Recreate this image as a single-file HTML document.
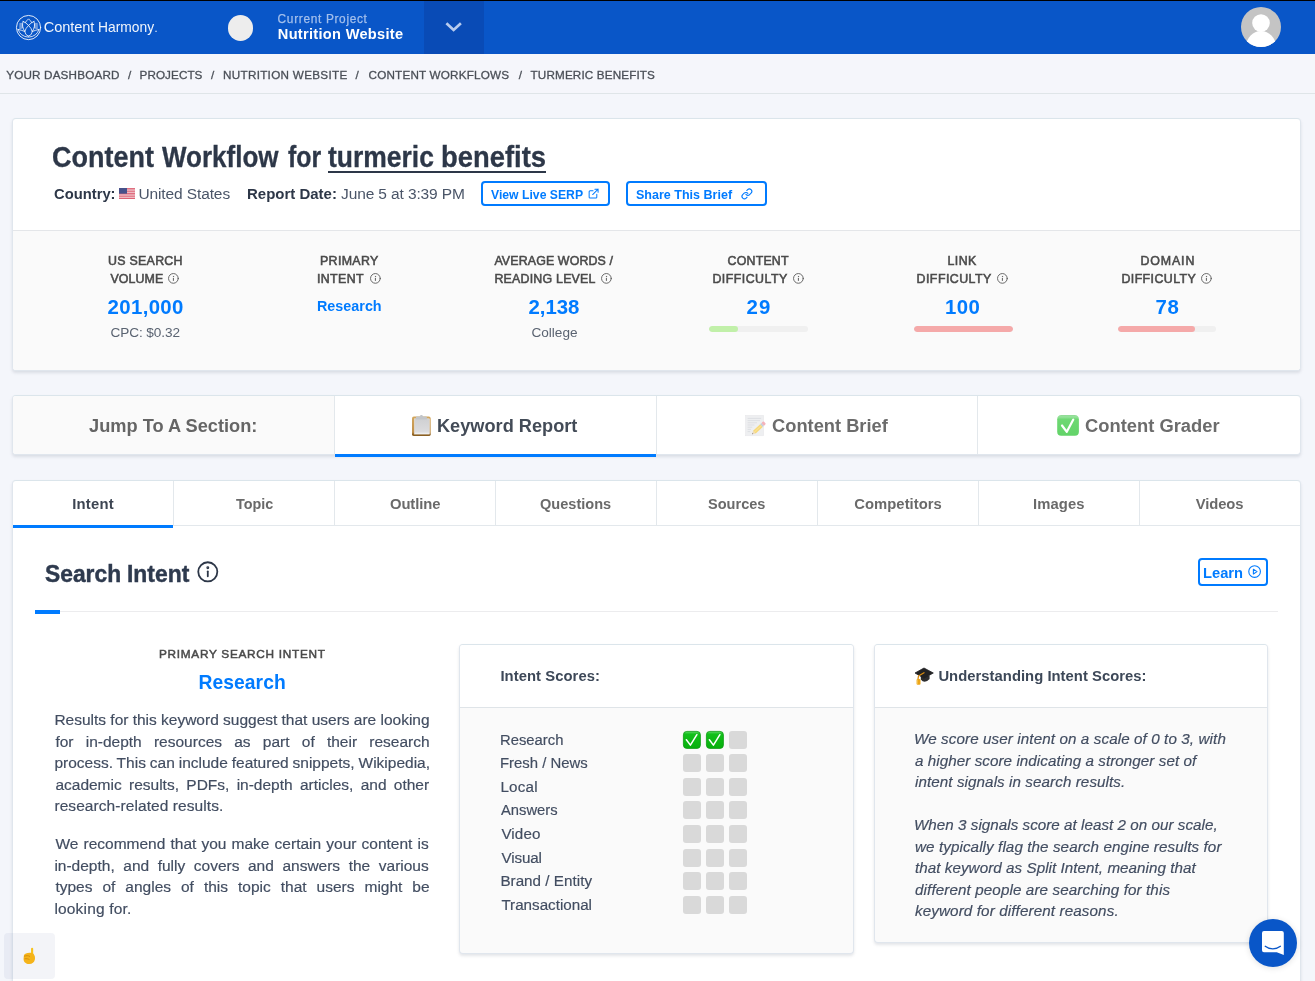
<!DOCTYPE html>
<html>
<head>
<meta charset="utf-8">
<title>Content Workflow for turmeric benefits</title>
<style>
*{box-sizing:border-box;margin:0;padding:0}
html,body{width:1315px;height:981px;overflow:hidden}
body{font-family:"Liberation Sans",sans-serif;background:#f4f6fb;color:#2d3748;position:relative}
.a{position:absolute}
.t{position:absolute;white-space:nowrap;line-height:1;font-family:"Liberation Sans",sans-serif}
svg{position:absolute;overflow:visible}
#hdr{left:0;top:0;width:1315px;height:54px;background:#0956c8;border-top:1px solid #000}
#dd{left:424px;top:1px;width:59.5px;height:53px;background:#094bb6}
#pc{left:227.5px;top:15px;width:25.5px;height:25.5px;border-radius:50%;background:#ededed}
#bc{left:0;top:54px;width:1315px;height:40px;background:#f5f6fb;border-bottom:1px solid #dfe5e8}
.card{background:#fff;border:1px solid #e0e6ed;border-top-color:#dbe5eb;border-radius:4px;box-shadow:0 2px 3px rgba(95,105,125,.17)}
.sep{background:#e3e8ec;width:1px}
.hl{background:#e3e8ec;height:1px}
.btn{border:2px solid #007bff;border-radius:4px;background:#fff}
.bar{height:6px;border-radius:3px;background:#f0f0f0;top:326px;overflow:hidden}
.bar i{display:block;height:6px;border-radius:3px}
.sq{width:17.8px;height:17.5px;border-radius:3px;background:#d9d9d9}
</style>
</head>
<body>
<!-- header -->
<div id="hdr" class="a"></div>
<div id="dd" class="a"></div>
<div id="pc" class="a"></div>
<svg style="left:15.930px;top:14.930px" width="25.100" height="25.100" viewBox="158 138 500 500" fill="none" stroke="#fff" stroke-opacity=".92" stroke-width="17" stroke-linecap="round" stroke-linejoin="round">
<circle cx="408" cy="388" r="241" stroke-width="19"/>
<path d="M340 292Q368 250 408 215Q448 250 476 292" />
<path d="M300 265Q350 285 408 345Q470 405 482 470Q480 535 408 562"/>
<path d="M516 265Q466 285 408 345Q346 405 334 470Q336 535 408 562"/>
<path d="M300 265Q284 300 290 360Q300 425 332 462"/>
<path d="M516 265Q532 300 526 360Q516 425 484 462"/>
<path d="M238 305L286 305L290 398L236 412Z" fill="#fff" fill-opacity=".4" stroke-width="9" stroke-opacity=".7"/>
<path d="M578 305L530 305L526 398L580 412Z" fill="#fff" fill-opacity=".4" stroke-width="9" stroke-opacity=".7"/>
<path d="M200 425Q262 438 332 466M616 425Q554 438 484 466"/>
<path d="M200 425Q240 565 408 580Q576 565 616 425"/>
</svg>
<svg style="left:445px;top:21.400px" width="17" height="11" viewBox="0 0 17 11" fill="none" stroke="#b7cbee" stroke-width="2.700" stroke-linecap="butt" stroke-linejoin="miter"><path d="M1.400 2.300l7.200 6.600L15.900 2.300"/></svg>
<svg style="left:1240.800px;top:7px" width="40" height="40" viewBox="0 0 40 40"><defs><clipPath id="av"><circle cx="20" cy="20" r="20"/></clipPath></defs><circle cx="20" cy="20" r="20" fill="#c4c4c4"/><g clip-path="url(#av)" fill="#fff"><circle cx="20" cy="16" r="8.800"/><ellipse cx="20" cy="40" rx="15" ry="16"/></g></svg>

<!-- breadcrumb -->
<div id="bc" class="a"></div>

<!-- card 1 -->
<div class="a card" style="left:12px;top:118px;width:1289px;height:252.500px"></div>
<div class="a" style="left:13px;top:230px;width:1287px;height:139.500px;background:#fafafa;border-top:1px solid #e4e6e9;border-radius:0 0 3px 3px"></div>
<div class="a" style="left:328px;top:171px;width:217.600px;height:2px;background:#2d3748"></div>
<!-- flag -->
<svg style="left:118.900px;top:188px" width="16" height="10.9" viewBox="0 0 16 10.9"><rect y="0.000" width="16" height="0.858" fill="#d8485e"/><rect y="0.838" width="16" height="0.858" fill="#ecb4bc"/><rect y="1.677" width="16" height="0.858" fill="#d8485e"/><rect y="2.515" width="16" height="0.858" fill="#ecb4bc"/><rect y="3.354" width="16" height="0.858" fill="#d8485e"/><rect y="4.192" width="16" height="0.858" fill="#ecb4bc"/><rect y="5.031" width="16" height="0.858" fill="#d8485e"/><rect y="5.869" width="16" height="0.858" fill="#ecb4bc"/><rect y="6.708" width="16" height="0.858" fill="#d8485e"/><rect y="7.546" width="16" height="0.858" fill="#ecb4bc"/><rect y="8.385" width="16" height="0.858" fill="#d8485e"/><rect y="9.223" width="16" height="0.858" fill="#ecb4bc"/><rect y="10.062" width="16" height="0.858" fill="#d8485e"/><rect width="8" height="5.700" fill="#47518a"/></svg>
<div class="a btn" style="left:481px;top:181px;width:128.600px;height:24.600px"></div>
<div class="a btn" style="left:626px;top:181px;width:141px;height:24.600px"></div>
<svg style="left:588.400px;top:188.400px" width="11" height="11" viewBox="0 0 24 24" fill="none" stroke="#007bff" stroke-width="2.200" stroke-linecap="round" stroke-linejoin="round"><path d="M19.200 13.500V20a2 2 0 0 1-2 2H4.500a2 2 0 0 1-2-2V8.200a2 2 0 0 1 2-2H11M15 2.500h7v7M10.200 14.300L22 2.500"/></svg>
<svg style="left:740.800px;top:188.400px" width="11.800" height="11.800" viewBox="0 0 24 24" fill="none" stroke="#007bff" stroke-width="2.200" stroke-linecap="round" stroke-linejoin="round"><path d="M10 13a5 5 0 0 0 7.540.54l3-3a5 5 0 0 0-7.070-7.070l-1.720 1.710M14 11a5 5 0 0 0-7.540-.54l-3 3a5 5 0 0 0 7.070 7.070l1.710-1.710"/></svg>
<!-- info icons -->
<svg style="left:168.30px;top:272.55px" width="10.8" height="10.8" viewBox="0 0 24 24" fill="none" stroke="#5a5a5a" stroke-width="2" stroke-linecap="round"><circle cx="12" cy="12" r="10.800"/><path d="M12 11.800v4.800" stroke-width="2.200"/><circle cx="12" cy="7.800" r=".5" fill="#5a5a5a" stroke-width="1.600"/></svg>
<svg style="left:369.90px;top:272.55px" width="10.8" height="10.8" viewBox="0 0 24 24" fill="none" stroke="#5a5a5a" stroke-width="2" stroke-linecap="round"><circle cx="12" cy="12" r="10.800"/><path d="M12 11.800v4.800" stroke-width="2.200"/><circle cx="12" cy="7.800" r=".5" fill="#5a5a5a" stroke-width="1.600"/></svg>
<svg style="left:601.10px;top:272.55px" width="10.8" height="10.8" viewBox="0 0 24 24" fill="none" stroke="#5a5a5a" stroke-width="2" stroke-linecap="round"><circle cx="12" cy="12" r="10.800"/><path d="M12 11.800v4.800" stroke-width="2.200"/><circle cx="12" cy="7.800" r=".5" fill="#5a5a5a" stroke-width="1.600"/></svg>
<svg style="left:792.50px;top:272.55px" width="10.8" height="10.8" viewBox="0 0 24 24" fill="none" stroke="#5a5a5a" stroke-width="2" stroke-linecap="round"><circle cx="12" cy="12" r="10.800"/><path d="M12 11.800v4.800" stroke-width="2.200"/><circle cx="12" cy="7.800" r=".5" fill="#5a5a5a" stroke-width="1.600"/></svg>
<svg style="left:997.10px;top:272.55px" width="10.8" height="10.8" viewBox="0 0 24 24" fill="none" stroke="#5a5a5a" stroke-width="2" stroke-linecap="round"><circle cx="12" cy="12" r="10.800"/><path d="M12 11.800v4.800" stroke-width="2.200"/><circle cx="12" cy="7.800" r=".5" fill="#5a5a5a" stroke-width="1.600"/></svg>
<svg style="left:1201.30px;top:272.55px" width="10.8" height="10.8" viewBox="0 0 24 24" fill="none" stroke="#5a5a5a" stroke-width="2" stroke-linecap="round"><circle cx="12" cy="12" r="10.800"/><path d="M12 11.800v4.800" stroke-width="2.200"/><circle cx="12" cy="7.800" r=".5" fill="#5a5a5a" stroke-width="1.600"/></svg>
<!-- bars -->
<div class="a bar" style="left:708.600px;width:99.200px"><i style="width:29.200px;background:#c1f0a9"></i></div>
<div class="a bar" style="left:913.600px;width:99.400px"><i style="width:99.400px;background:#f5a9a9"></i></div>
<div class="a bar" style="left:1117.600px;width:98.800px"><i style="width:77px;background:#f5a9a9"></i></div>

<!-- jump card -->
<div class="a card" style="left:12px;top:395px;width:1289px;height:60px;background:#fff"></div>
<div class="a" style="left:13px;top:396px;width:321px;height:58px;background:#fafafa;border-radius:3px 0 0 3px"></div>
<div class="a sep" style="left:334px;top:396px;height:58px"></div>
<div class="a sep" style="left:656px;top:396px;height:58px"></div>
<div class="a sep" style="left:977px;top:396px;height:58px"></div>
<div class="a" style="left:335px;top:454px;width:320.500px;height:3px;background:#007bff"></div>
<!-- clipboard -->
<svg style="left:412.400px;top:414.800px" width="18.800" height="21.200" viewBox="0 0 18.800 21.200"><defs><linearGradient id="cb" x1="0" y1="0" x2="0" y2="1"><stop offset="0" stop-color="#d3a75e"/><stop offset=".8" stop-color="#c0904a"/><stop offset=".93" stop-color="#8a5f22"/></linearGradient><linearGradient id="cp" x1="0" y1="0" x2="0" y2="1"><stop offset="0" stop-color="#cfd0d2"/><stop offset=".85" stop-color="#dcdcde"/><stop offset="1" stop-color="#f4f4f5"/></linearGradient></defs><rect x="0" y="1.500" width="18.700" height="19.600" rx="1.900" fill="url(#cb)"/><rect x="2.400" y="3.800" width="15" height="15.300" fill="url(#cp)" stroke="#ececee" stroke-width=".5"/><path d="M3.900 4.400V2.600a1 1 0 0 1 1-1h2.700c.4-1 1-1.500 1.800-1.500s1.400.5 1.800 1.500h2.700a1 1 0 0 1 1 1v1.800z" fill="#c2c5c9"/></svg>
<!-- memo -->
<svg style="left:745.400px;top:415px" width="21" height="21" viewBox="0 0 21 21" opacity=".8"><rect x=".4" y=".3" width="18.300" height="20.500" fill="#ebecee" stroke="#e0e1e4" stroke-width=".5"/><path d="M2.600 3.400h13.600M2.600 5.600h12.400M2.600 7.800h9.400M2.600 10h6.800M2.600 12.200h4.600M2.600 14.400h3.400M2.600 16.600h2.600" stroke="#cdd0d5" stroke-width=".7"/><g transform="translate(7 19.200) rotate(-42.500)"><path d="M0 0l3.200-1.900v3.800z" fill="#ead2a8"/><path d="M0 0l1.100-.65v1.300z" fill="#55565c"/><rect x="3.200" y="-1.900" width="9.600" height="3.800" fill="#f6cf58"/><rect x="3.200" y="-.5" width="9.600" height="1" fill="#f9dc7c"/><rect x="12.800" y="-1.900" width="1.700" height="3.800" fill="#b9c3cf"/><rect x="14.500" y="-1.900" width="2.800" height="3.800" rx="1" fill="#f2a0aa"/></g></svg>
<!-- check -->
<svg style="left:1056.800px;top:415px" width="22.100" height="21" viewBox="0 0 22.100 21"><defs><linearGradient id="ck" x1="0" y1="0" x2="0" y2="1"><stop offset="0" stop-color="#63cc69"/><stop offset=".07" stop-color="#9be4a0"/><stop offset=".2" stop-color="#6ed873"/><stop offset="1" stop-color="#62d368"/></linearGradient></defs><rect x=".2" y=".2" width="21.700" height="20.600" rx="4" fill="url(#ck)"/><path d="M5 10.500l4.800 6.300L16.300 4.600" fill="none" stroke="#fff" stroke-width="2.200" stroke-linecap="round" stroke-linejoin="round"/></svg>


<!-- tabs card -->
<div class="a card" style="left:12px;top:480px;width:1289px;height:520px"></div>
<div class="a hl" style="left:13px;top:525px;width:1287px"></div>
<div class="a sep" style="left:173px;top:481px;height:44px"></div>
<div class="a sep" style="left:334px;top:481px;height:44px"></div>
<div class="a sep" style="left:495px;top:481px;height:44px"></div>
<div class="a sep" style="left:656px;top:481px;height:44px"></div>
<div class="a sep" style="left:817px;top:481px;height:44px"></div>
<div class="a sep" style="left:978px;top:481px;height:44px"></div>
<div class="a sep" style="left:1139px;top:481px;height:44px"></div>
<div class="a" style="left:13px;top:525px;width:160px;height:3px;background:#007bff"></div>

<!-- section head -->
<svg style="left:196.800px;top:561px" width="21.600" height="21.600" viewBox="0 0 24 24" fill="none" stroke="#2d3748" stroke-width="2" stroke-linecap="round"><circle cx="12" cy="12" r="10.600"/><path d="M12 11.500v5.500"/><circle cx="12" cy="7.500" r=".6" fill="#2d3748"/></svg>
<div class="a" style="left:60px;top:611px;width:1217.700px;height:1px;background:#ececee"></div>
<div class="a" style="left:35px;top:609.800px;width:24.600px;height:4.200px;background:#007bff"></div>
<div class="a btn" style="left:1198px;top:558px;width:69.600px;height:27.800px"></div>
<svg style="left:1247.800px;top:565.200px" width="13.200" height="13.200" viewBox="0 0 24 24" fill="none" stroke="#007bff" stroke-width="2" stroke-linejoin="round"><circle cx="12" cy="12" r="10.600"/><path d="M9.800 7.600l6.600 4.400-6.600 4.400z"/></svg>

<!-- intent scores card -->
<div class="a card" style="left:459px;top:644px;width:394.500px;height:309.500px;background:#fafafa"></div>
<div class="a" style="left:460px;top:645px;width:392.500px;height:62.700px;background:#fff;border-bottom:1px solid #dfe4e8;border-radius:3px 3px 0 0"></div>
<svg style="left:682.8px;top:731.1px" width="17.800" height="17.800" viewBox="0 0 17.800 17.800"><defs><linearGradient id="gg0" x1="0" y1="0" x2="0" y2="1"><stop offset="0" stop-color="#5fd968"/><stop offset=".16" stop-color="#12c01a"/><stop offset="1" stop-color="#06b00c"/></linearGradient></defs><rect x=".4" y=".4" width="17" height="17" rx="3.400" fill="url(#gg0)" stroke="#0a9c10" stroke-width=".8"/><path d="M3.400 8.700l4 5.400L13.900 3.700" fill="none" stroke="#fff" stroke-width="1.500" stroke-linecap="round" stroke-linejoin="round"/></svg>
<svg style="left:705.8px;top:731.1px" width="17.800" height="17.800" viewBox="0 0 17.800 17.800"><defs><linearGradient id="gg1" x1="0" y1="0" x2="0" y2="1"><stop offset="0" stop-color="#5fd968"/><stop offset=".16" stop-color="#12c01a"/><stop offset="1" stop-color="#06b00c"/></linearGradient></defs><rect x=".4" y=".4" width="17" height="17" rx="3.400" fill="url(#gg1)" stroke="#0a9c10" stroke-width=".8"/><path d="M3.400 8.700l4 5.400L13.900 3.700" fill="none" stroke="#fff" stroke-width="1.500" stroke-linecap="round" stroke-linejoin="round"/></svg>
<div class="a sq" style="left:728.9px;top:731.1px"></div>
<div class="a sq" style="left:682.8px;top:754.1px"></div>
<div class="a sq" style="left:705.8px;top:754.1px"></div>
<div class="a sq" style="left:728.9px;top:754.1px"></div>
<div class="a sq" style="left:682.8px;top:778.0px"></div>
<div class="a sq" style="left:705.8px;top:778.0px"></div>
<div class="a sq" style="left:728.9px;top:778.0px"></div>
<div class="a sq" style="left:682.8px;top:801.0px"></div>
<div class="a sq" style="left:705.8px;top:801.0px"></div>
<div class="a sq" style="left:728.9px;top:801.0px"></div>
<div class="a sq" style="left:682.8px;top:825.0px"></div>
<div class="a sq" style="left:705.8px;top:825.0px"></div>
<div class="a sq" style="left:728.9px;top:825.0px"></div>
<div class="a sq" style="left:682.8px;top:849.0px"></div>
<div class="a sq" style="left:705.8px;top:849.0px"></div>
<div class="a sq" style="left:728.9px;top:849.0px"></div>
<div class="a sq" style="left:682.8px;top:872.2px"></div>
<div class="a sq" style="left:705.8px;top:872.2px"></div>
<div class="a sq" style="left:728.9px;top:872.2px"></div>
<div class="a sq" style="left:682.8px;top:896.2px"></div>
<div class="a sq" style="left:705.8px;top:896.2px"></div>
<div class="a sq" style="left:728.9px;top:896.2px"></div>

<!-- understanding card -->
<div class="a card" style="left:874px;top:644px;width:393.500px;height:298.500px;background:#fafafa"></div>
<div class="a" style="left:875px;top:645px;width:391.500px;height:62.700px;background:#fff;border-bottom:1px solid #dfe4e8;border-radius:3px 3px 0 0"></div>

<!-- grad cap -->
<svg style="left:914px;top:667px" width="20" height="19" viewBox="0 0 20 19"><path d="M6.800 8.500V12.600Q10.600 17.400 15.600 12V8.500z" fill="#2c2c2e"/><path d="M1 6L10 1L19.300 6L10 11.200z" fill="#222224" stroke="#222224" stroke-width=".8" stroke-linejoin="round"/><path d="M10 5.800L4.500 9L3.900 12.600" fill="none" stroke="#d98c12" stroke-width="1.300" stroke-linecap="round" stroke-linejoin="round"/><rect x="2.600" y="12" width="3.900" height="5.800" rx="1.100" fill="#eda518"/><path d="M3.400 12.600v4.600" stroke="#f8d060" stroke-width=".7"/></svg>

<!-- text -->
<div class="a" style="left:0;top:0;width:1315px;height:981px;will-change:transform">
<span class="t" style="left:43.80px;top:20.00px;font-size:14.6px;letter-spacing:-0.110px;color:rgba(255,255,255,.94);">Content</span>
<span class="t" style="left:97.75px;top:20.00px;font-size:14.6px;transform:scaleX(0.9473);transform-origin:0 0;color:rgba(255,255,255,.94);">Harmony</span>
<span class="t" style="left:154.40px;top:23.00px;font-size:11px;color:rgba(255,255,255,.94);">.</span>
<span class="t" style="left:277.60px;top:13.80px;font-size:11.9px;letter-spacing:0.667px;color:#a3bfec;-webkit-text-stroke:.25px #a3bfec;">Current Project</span>
<span class="t" style="left:277.80px;top:26.80px;font-size:14.6px;letter-spacing:0.299px;font-weight:700;color:#fff;">Nutrition Website</span>
<span class="t" style="left:6.20px;top:69.00px;font-size:11.7px;letter-spacing:0.169px;color:#4a4f57;-webkit-text-stroke:.3px #4a4f57;">YOUR DASHBOARD</span>
<span class="t" style="left:128.00px;top:69.00px;font-size:11.7px;color:#4a4f57;-webkit-text-stroke:.3px #4a4f57;">/</span>
<span class="t" style="left:139.60px;top:69.00px;font-size:11.7px;letter-spacing:0.065px;color:#4a4f57;-webkit-text-stroke:.3px #4a4f57;">PROJECTS</span>
<span class="t" style="left:211.00px;top:69.00px;font-size:11.7px;color:#4a4f57;-webkit-text-stroke:.3px #4a4f57;">/</span>
<span class="t" style="left:223.00px;top:69.00px;font-size:11.7px;letter-spacing:0.295px;color:#4a4f57;-webkit-text-stroke:.3px #4a4f57;">NUTRITION WEBSITE</span>
<span class="t" style="left:355.60px;top:69.00px;font-size:11.7px;color:#4a4f57;-webkit-text-stroke:.3px #4a4f57;">/</span>
<span class="t" style="left:368.50px;top:69.00px;font-size:11.7px;letter-spacing:0.197px;color:#4a4f57;-webkit-text-stroke:.3px #4a4f57;">CONTENT WORKFLOWS</span>
<span class="t" style="left:518.80px;top:69.00px;font-size:11.7px;color:#4a4f57;-webkit-text-stroke:.3px #4a4f57;">/</span>
<span class="t" style="left:530.60px;top:69.00px;font-size:11.7px;letter-spacing:0.139px;color:#4a4f57;-webkit-text-stroke:.3px #4a4f57;">TURMERIC BENEFITS</span>
<span class="t" style="left:52.06px;top:143.00px;font-size:28.6px;transform:scaleX(0.9435);transform-origin:0 0;font-weight:700;color:#2d3748;-webkit-text-stroke:.3px #2d3748;">Content</span>
<span class="t" style="left:162.40px;top:143.00px;font-size:28.6px;transform:scaleX(0.9092);transform-origin:0 0;font-weight:700;color:#2d3748;-webkit-text-stroke:.3px #2d3748;">Workflow</span>
<span class="t" style="left:288.00px;top:143.00px;font-size:28.6px;transform:scaleX(0.8687);transform-origin:0 0;font-weight:700;color:#2d3748;-webkit-text-stroke:.3px #2d3748;">for</span>
<span class="t" style="left:328.00px;top:143.00px;font-size:28.6px;transform:scaleX(0.9256);transform-origin:0 0;font-weight:700;color:#2d3748;-webkit-text-stroke:.3px #2d3748;">turmeric</span>
<span class="t" style="left:440.84px;top:143.00px;font-size:28.6px;transform:scaleX(0.9580);transform-origin:0 0;font-weight:700;color:#2d3748;-webkit-text-stroke:.3px #2d3748;">benefits</span>
<span class="t" style="left:53.60px;top:186.00px;font-size:15.5px;transform:scaleX(0.9525);transform-origin:0 0;font-weight:700;color:#2d3748;">Country:</span>
<span class="t" style="left:138.40px;top:186.00px;font-size:15.5px;letter-spacing:-0.109px;color:#4a5568;">United States</span>
<span class="t" style="left:246.63px;top:186.00px;font-size:15.5px;transform:scaleX(0.9665);transform-origin:0 0;font-weight:700;color:#2d3748;">Report Date:</span>
<span class="t" style="left:341.00px;top:186.00px;font-size:15.5px;letter-spacing:-0.118px;color:#4a5568;">June 5 at 3:39 PM</span>
<span class="t" style="left:491.40px;top:188.00px;font-size:13.3px;transform:scaleX(0.9184);transform-origin:0 0;font-weight:700;color:#007bff;">View Live SERP</span>
<span class="t" style="left:636.00px;top:188.00px;font-size:13.3px;transform:scaleX(0.9420);transform-origin:0 0;font-weight:700;color:#007bff;">Share This Brief</span>
<span class="t" style="left:108.00px;top:255.00px;font-size:12.4px;letter-spacing:0.282px;color:#4a4a4a;-webkit-text-stroke:.55px #4a4a4a;">US SEARCH</span>
<span class="t" style="left:110.40px;top:273.00px;font-size:12.4px;letter-spacing:0.107px;color:#4a4a4a;-webkit-text-stroke:.55px #4a4a4a;">VOLUME</span>
<span class="t" style="left:320.00px;top:255.00px;font-size:12.4px;letter-spacing:0.339px;color:#4a4a4a;-webkit-text-stroke:.55px #4a4a4a;">PRIMARY</span>
<span class="t" style="left:317.00px;top:273.00px;font-size:12.4px;letter-spacing:0.366px;color:#4a4a4a;-webkit-text-stroke:.55px #4a4a4a;">INTENT</span>
<span class="t" style="left:494.40px;top:255.00px;font-size:12.4px;letter-spacing:0.131px;color:#4a4a4a;-webkit-text-stroke:.55px #4a4a4a;">AVERAGE WORDS /</span>
<span class="t" style="left:494.40px;top:273.00px;font-size:12.4px;letter-spacing:0.218px;color:#4a4a4a;-webkit-text-stroke:.55px #4a4a4a;">READING LEVEL</span>
<span class="t" style="left:727.60px;top:255.00px;font-size:12.4px;letter-spacing:0.181px;color:#4a4a4a;-webkit-text-stroke:.55px #4a4a4a;">CONTENT</span>
<span class="t" style="left:712.40px;top:273.00px;font-size:12.4px;letter-spacing:0.466px;color:#4a4a4a;-webkit-text-stroke:.55px #4a4a4a;">DIFFICULTY</span>
<span class="t" style="left:947.60px;top:255.00px;font-size:12.4px;letter-spacing:0.373px;color:#4a4a4a;-webkit-text-stroke:.55px #4a4a4a;">LINK</span>
<span class="t" style="left:916.60px;top:273.00px;font-size:12.4px;letter-spacing:0.444px;color:#4a4a4a;-webkit-text-stroke:.55px #4a4a4a;">DIFFICULTY</span>
<span class="t" style="left:1140.40px;top:255.00px;font-size:12.4px;letter-spacing:0.877px;color:#4a4a4a;-webkit-text-stroke:.55px #4a4a4a;">DOMAIN</span>
<span class="t" style="left:1121.40px;top:273.00px;font-size:12.4px;letter-spacing:0.422px;color:#4a4a4a;-webkit-text-stroke:.55px #4a4a4a;">DIFFICULTY</span>
<span class="t" style="left:107.60px;top:297.00px;font-size:20.4px;letter-spacing:0.339px;font-weight:700;color:#007bff;">201,000</span>
<span class="t" style="left:528.60px;top:297.00px;font-size:20.4px;letter-spacing:-0.072px;font-weight:700;color:#007bff;">2,138</span>
<span class="t" style="left:746.60px;top:297.00px;font-size:20.4px;letter-spacing:1.060px;font-weight:700;color:#007bff;">29</span>
<span class="t" style="left:945.00px;top:297.00px;font-size:20.4px;letter-spacing:0.460px;font-weight:700;color:#007bff;">100</span>
<span class="t" style="left:1155.60px;top:297.00px;font-size:20.4px;letter-spacing:0.660px;font-weight:700;color:#007bff;">78</span>
<span class="t" style="left:317.40px;top:299.00px;font-size:14.8px;transform:scaleX(0.9701);transform-origin:0 0;font-weight:700;color:#007bff;">Research</span>
<span class="t" style="left:110.60px;top:326.00px;font-size:13.6px;letter-spacing:-0.101px;color:#5a6371;">CPC: $0.32</span>
<span class="t" style="left:531.40px;top:326.00px;font-size:13.6px;letter-spacing:0.010px;color:#5a6371;">College</span>
<span class="t" style="left:89.00px;top:416.40px;font-size:19px;transform:scaleX(0.9593);transform-origin:0 0;font-weight:700;color:#656565;">Jump To A Section:</span>
<span class="t" style="left:437.45px;top:416.00px;font-size:19.2px;transform:scaleX(0.9472);transform-origin:0 0;font-weight:700;color:#434b57;">Keyword Report</span>
<span class="t" style="left:772.00px;top:416.00px;font-size:19.2px;transform:scaleX(0.9531);transform-origin:0 0;font-weight:700;color:#6c6c6c;">Content Brief</span>
<span class="t" style="left:1085.20px;top:416.00px;font-size:19.2px;transform:scaleX(0.9564);transform-origin:0 0;font-weight:700;color:#6c6c6c;">Content Grader</span>
<span class="t" style="left:72.20px;top:497.00px;font-size:14.8px;letter-spacing:0.251px;font-weight:700;color:#3d4552;">Intent</span>
<span class="t" style="left:235.60px;top:497.00px;font-size:14.8px;transform:scaleX(0.9704);transform-origin:0 0;font-weight:700;color:#6a6a6a;">Topic</span>
<span class="t" style="left:390.00px;top:497.00px;font-size:14.8px;letter-spacing:-0.089px;font-weight:700;color:#6a6a6a;">Outline</span>
<span class="t" style="left:540.40px;top:497.00px;font-size:14.8px;transform:scaleX(0.9844);transform-origin:0 0;font-weight:700;color:#6a6a6a;">Questions</span>
<span class="t" style="left:708.20px;top:497.00px;font-size:14.8px;transform:scaleX(0.9834);transform-origin:0 0;font-weight:700;color:#6a6a6a;">Sources</span>
<span class="t" style="left:854.30px;top:497.00px;font-size:14.8px;letter-spacing:0.039px;font-weight:700;color:#6a6a6a;">Competitors</span>
<span class="t" style="left:1033.00px;top:497.00px;font-size:14.8px;letter-spacing:0.087px;font-weight:700;color:#6a6a6a;">Images</span>
<span class="t" style="left:1195.70px;top:497.00px;font-size:14.8px;letter-spacing:-0.084px;font-weight:700;color:#6a6a6a;">Videos</span>
<span class="t" style="left:45.30px;top:562.00px;font-size:24.4px;transform:scaleX(0.9359);transform-origin:0 0;font-weight:700;color:#2e3a4e;-webkit-text-stroke:.45px #2e3a4e;">Search</span>
<span class="t" style="left:127.06px;top:562.00px;font-size:24.4px;transform:scaleX(0.9378);transform-origin:0 0;font-weight:700;color:#2e3a4e;-webkit-text-stroke:.45px #2e3a4e;">Intent</span>
<span class="t" style="left:1203.23px;top:564.80px;font-size:15.2px;transform:scaleX(0.9680);transform-origin:0 0;font-weight:700;color:#007bff;">Learn</span>
<span class="t" style="left:159.00px;top:649.00px;font-size:11.8px;letter-spacing:0.718px;color:#4a4a4a;-webkit-text-stroke:.5px #4a4a4a;">PRIMARY SEARCH INTENT</span>
<span class="t" style="left:198.40px;top:672.60px;font-size:19.3px;letter-spacing:0.079px;font-weight:700;color:#007bff;">Research</span>
<span class="t" style="left:54.40px;top:711.80px;font-size:15.5px;word-spacing:-0.051px;color:#424d61;-webkit-text-stroke:.18px #424d61;">Results for this keyword suggest that users are looking</span>
<span class="t" style="left:55.40px;top:733.70px;font-size:15.5px;word-spacing:7.922px;color:#424d61;-webkit-text-stroke:.18px #424d61;">for in-depth resources as part of their research</span>
<span class="t" style="left:54.40px;top:755.00px;font-size:15.5px;word-spacing:-0.386px;color:#424d61;-webkit-text-stroke:.18px #424d61;">process. This can include featured snippets, Wikipedia,</span>
<span class="t" style="left:55.40px;top:776.60px;font-size:15.5px;word-spacing:2.994px;color:#424d61;-webkit-text-stroke:.18px #424d61;">academic results, PDFs, in-depth articles, and other</span>
<span class="t" style="left:54.40px;top:797.80px;font-size:15.5px;letter-spacing:0.074px;color:#424d61;-webkit-text-stroke:.18px #424d61;">research-related results.</span>
<span class="t" style="left:55.40px;top:836.20px;font-size:15.5px;word-spacing:0.829px;color:#424d61;-webkit-text-stroke:.18px #424d61;">We recommend that you make certain your content is</span>
<span class="t" style="left:54.40px;top:857.90px;font-size:15.5px;word-spacing:4.245px;color:#424d61;-webkit-text-stroke:.18px #424d61;">in-depth, and fully covers and answers the various</span>
<span class="t" style="left:55.40px;top:879.40px;font-size:15.5px;word-spacing:5.681px;color:#424d61;-webkit-text-stroke:.18px #424d61;">types of angles of this topic that users might be</span>
<span class="t" style="left:54.40px;top:900.90px;font-size:15.5px;letter-spacing:0.177px;color:#424d61;-webkit-text-stroke:.18px #424d61;">looking for.</span>
<span class="t" style="left:500.40px;top:669.00px;font-size:14.8px;letter-spacing:0.066px;font-weight:700;color:#3d4858;">Intent Scores:</span>
<span class="t" style="left:500.42px;top:732.00px;font-size:15.2px;transform:scaleX(0.9756);transform-origin:0 0;color:#424d61;-webkit-text-stroke:.18px #424d61;">Research</span>
<span class="t" style="left:500.42px;top:755.00px;font-size:15.2px;transform:scaleX(0.9813);transform-origin:0 0;color:#424d61;-webkit-text-stroke:.18px #424d61;">Fresh / News</span>
<span class="t" style="left:500.40px;top:779.00px;font-size:15.2px;letter-spacing:0.217px;color:#424d61;-webkit-text-stroke:.18px #424d61;">Local</span>
<span class="t" style="left:501.40px;top:802.00px;font-size:15.2px;transform:scaleX(0.9720);transform-origin:0 0;color:#424d61;-webkit-text-stroke:.18px #424d61;">Answers</span>
<span class="t" style="left:501.40px;top:826.00px;font-size:15.2px;letter-spacing:0.119px;color:#424d61;-webkit-text-stroke:.18px #424d61;">Video</span>
<span class="t" style="left:501.40px;top:850.00px;font-size:15.2px;letter-spacing:-0.103px;color:#424d61;-webkit-text-stroke:.18px #424d61;">Visual</span>
<span class="t" style="left:500.40px;top:873.00px;font-size:15.2px;letter-spacing:0.033px;color:#424d61;-webkit-text-stroke:.18px #424d61;">Brand / Entity</span>
<span class="t" style="left:501.40px;top:897.00px;font-size:15.2px;letter-spacing:-0.003px;color:#424d61;-webkit-text-stroke:.18px #424d61;">Transactional</span>
<span class="t" style="left:938.40px;top:669.00px;font-size:14.8px;letter-spacing:0.035px;font-weight:700;color:#3d4858;">Understanding Intent Scores:</span>
<span class="t" style="left:914.00px;top:731.00px;font-size:15.2px;letter-spacing:0.105px;font-style:italic;color:#424d61;-webkit-text-stroke:.18px #424d61;">We score user intent on a scale of 0 to 3, with</span>
<span class="t" style="left:915.00px;top:752.50px;font-size:15.2px;letter-spacing:0.062px;font-style:italic;color:#424d61;-webkit-text-stroke:.18px #424d61;">a higher score indicating a stronger set of</span>
<span class="t" style="left:915.00px;top:774.00px;font-size:15.2px;letter-spacing:0.080px;font-style:italic;color:#424d61;-webkit-text-stroke:.18px #424d61;">intent signals in search results.</span>
<span class="t" style="left:914.00px;top:817.00px;font-size:15.2px;letter-spacing:0.032px;font-style:italic;color:#424d61;-webkit-text-stroke:.18px #424d61;">When 3 signals score at least 2 on our scale,</span>
<span class="t" style="left:915.00px;top:838.50px;font-size:15.2px;letter-spacing:0.092px;font-style:italic;color:#424d61;-webkit-text-stroke:.18px #424d61;">we typically flag the search engine results for</span>
<span class="t" style="left:915.00px;top:860.00px;font-size:15.2px;letter-spacing:0.054px;font-style:italic;color:#424d61;-webkit-text-stroke:.18px #424d61;">that keyword as Split Intent, meaning that</span>
<span class="t" style="left:915.00px;top:881.50px;font-size:15.2px;letter-spacing:0.112px;font-style:italic;color:#424d61;-webkit-text-stroke:.18px #424d61;">different people are searching for this</span>
<span class="t" style="left:915.00px;top:903.00px;font-size:15.2px;letter-spacing:0.123px;font-style:italic;color:#424d61;-webkit-text-stroke:.18px #424d61;">keyword for different reasons.</span>
</div>

<!-- floating widgets -->
<div class="a" style="left:4px;top:933px;width:51px;height:45.700px;background:rgba(110,122,175,.082);border-radius:4px"></div>
<svg style="left:22.600px;top:946.800px" width="12.400" height="17.800" viewBox="0 0 13.400 18.400"><rect x="8.700" y=".4" width="2.300" height="9" rx="1.150" fill="#f7c21c"/><path d="M1 8.600C1.600 6.400 5 5.400 8.800 5.800l2.600 1c1.400 2 2 4 1.400 6.600c-.6 2.800-2.800 4.600-6 4.600C2.800 18 .4 15.400.6 12z" fill="#f5b41a"/><path d="M1.200 9.600c2.400-.8 4.600-.8 6.400.2M1.600 12.400c2.200-.4 4 0 5.400.8" fill="none" stroke="#d18a0c" stroke-width="1"/></svg>
<div class="a" style="left:1248.750px;top:918.750px;width:48.300px;height:48.300px;border-radius:50%;background:#0956c8;box-shadow:0 1px 6px rgba(0,0,0,.12)"></div>
<svg style="left:1262px;top:931px" width="21.800" height="24" viewBox="0 0 21.800 24"><path d="M2 0h17.800a2 2 0 0 1 2 2V23.900l-7-2.600H2a2 2 0 0 1-2-2V2a2 2 0 0 1 2-2z" fill="#fff"/><path d="M3.200 15.300c4.200 3.400 11 3.400 15.200 0" fill="none" stroke="#0956c8" stroke-width="1.300" stroke-linecap="round"/></svg>
</body>
</html>
